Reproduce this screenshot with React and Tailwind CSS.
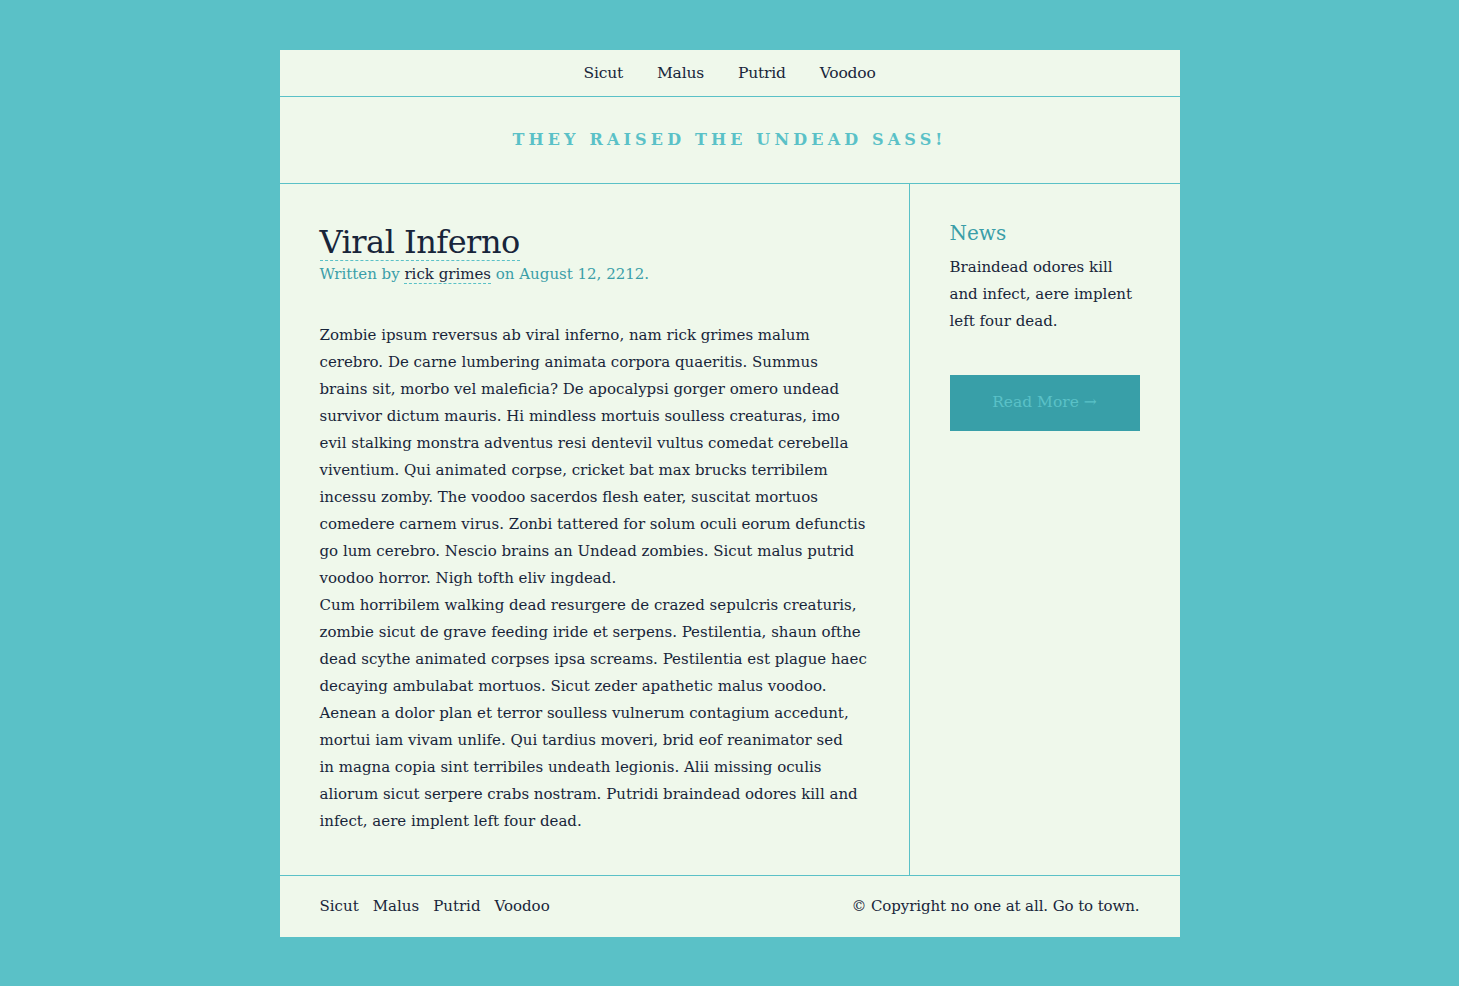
const serif = { fontFamily: '"DejaVu Serif", "Liberation Serif", serif' };

const navLinks = ["Sicut", "Malus", "Putrid", "Voodoo"];

const paraOne = [
  "Zombie ipsum reversus ab viral inferno, nam rick grimes malum",
  "cerebro. De carne lumbering animata corpora quaeritis. Summus",
  "brains sit, morbo vel maleficia? De apocalypsi gorger omero undead",
  "survivor dictum mauris. Hi mindless mortuis soulless creaturas, imo",
  "evil stalking monstra adventus resi dentevil vultus comedat cerebella",
  "viventium. Qui animated corpse, cricket bat max brucks terribilem",
  "incessu zomby. The voodoo sacerdos flesh eater, suscitat mortuos",
  "comedere carnem virus. Zonbi tattered for solum oculi eorum defunctis",
  "go lum cerebro. Nescio brains an Undead zombies. Sicut malus putrid",
  "voodoo horror. Nigh tofth eliv ingdead.",
];

const paraTwo = [
  "Cum horribilem walking dead resurgere de crazed sepulcris creaturis,",
  "zombie sicut de grave feeding iride et serpens. Pestilentia, shaun ofthe",
  "dead scythe animated corpses ipsa screams. Pestilentia est plague haec",
  "decaying ambulabat mortuos. Sicut zeder apathetic malus voodoo.",
  "Aenean a dolor plan et terror soulless vulnerum contagium accedunt,",
  "mortui iam vivam unlife. Qui tardius moveri, brid eof reanimator sed",
  "in magna copia sint terribiles undeath legionis. Alii missing oculis",
  "aliorum sicut serpere crabs nostram. Putridi braindead odores kill and",
  "infect, aere implent left four dead.",
];

function Lines({ lines }) {
  return (
    <p className="whitespace-nowrap">
      {lines.map((l, i) => (
        <span key={i} className="block">
          {l}
        </span>
      ))}
    </p>
  );
}

export default function App() {
  return (
    <div className="min-h-[986px] w-full bg-[#5ac1c7] py-[50px]" style={serif}>
      <div className="mx-auto w-[900px] bg-[#eff8eb] text-[#18253a]">
        {/* top nav */}
        <nav className="flex justify-center gap-[34px] border-b border-[#5ac1c7] py-[11px] text-[15.5px] leading-[24px]">
          {navLinks.map((n) => (
            <a key={n} href="#" className="tracking-[-0.2px]">
              {n}
            </a>
          ))}
        </nav>

        {/* banner */}
        <header className="flex h-[87px] items-center justify-center border-b border-[#5ac1c7]">
          <h2 className="text-[16px] font-bold tracking-[0.26em] text-[#5ac1c7]">
            THEY RAISED THE UNDEAD SASS!
          </h2>
        </header>

        {/* body */}
        <div className="flex">
          <main className="w-[630px] border-r border-[#5ac1c7] px-10 pt-10 pb-10">
            <h1 className="inline-block border-b border-dashed border-[#5ac1c7] text-[32px] leading-[36px] tracking-[-0.5px]">
              Viral Inferno
            </h1>
            <div className="text-[15px] leading-[27px] text-[#3a9ea8]">
              Written by{" "}
              <a href="#" className="border-b border-dashed border-[#5ac1c7] text-[#18253a]">
                rick grimes
              </a>{" "}
              on August 12, 2212.
            </div>
            <div className="mt-[34px] text-[15px] leading-[27px]">
              <Lines lines={paraOne} />
              <Lines lines={paraTwo} />
            </div>
          </main>

          <aside className="flex-1 px-10 pt-[36px]">
            <h3 className="text-[20px] leading-[26px] text-[#3a9ea8]">News</h3>
            <p className="mt-[8px] text-[15px] leading-[27px]">
              Braindead odores kill
              <br />
              and infect, aere implent
              <br />
              left four dead.
            </p>
            <a
              href="#"
              className="mt-[40px] flex h-[56px] w-[190px] items-center justify-center bg-[#389fa8] text-[15.5px] text-[#5ac1c7]"
            >
              Read More →
            </a>
          </aside>
        </div>

        {/* footer */}
        <footer className="flex items-center justify-between border-t border-[#5ac1c7] px-10 py-5 text-[15px] leading-[21px]">
          <div className="flex gap-[14px]">
            {navLinks.map((n) => (
              <a key={n} href="#">
                {n}
              </a>
            ))}
          </div>
          <span className="tracking-[-0.1px]">© Copyright no one at all. Go to town.</span>
        </footer>
      </div>
    </div>
  );
}
